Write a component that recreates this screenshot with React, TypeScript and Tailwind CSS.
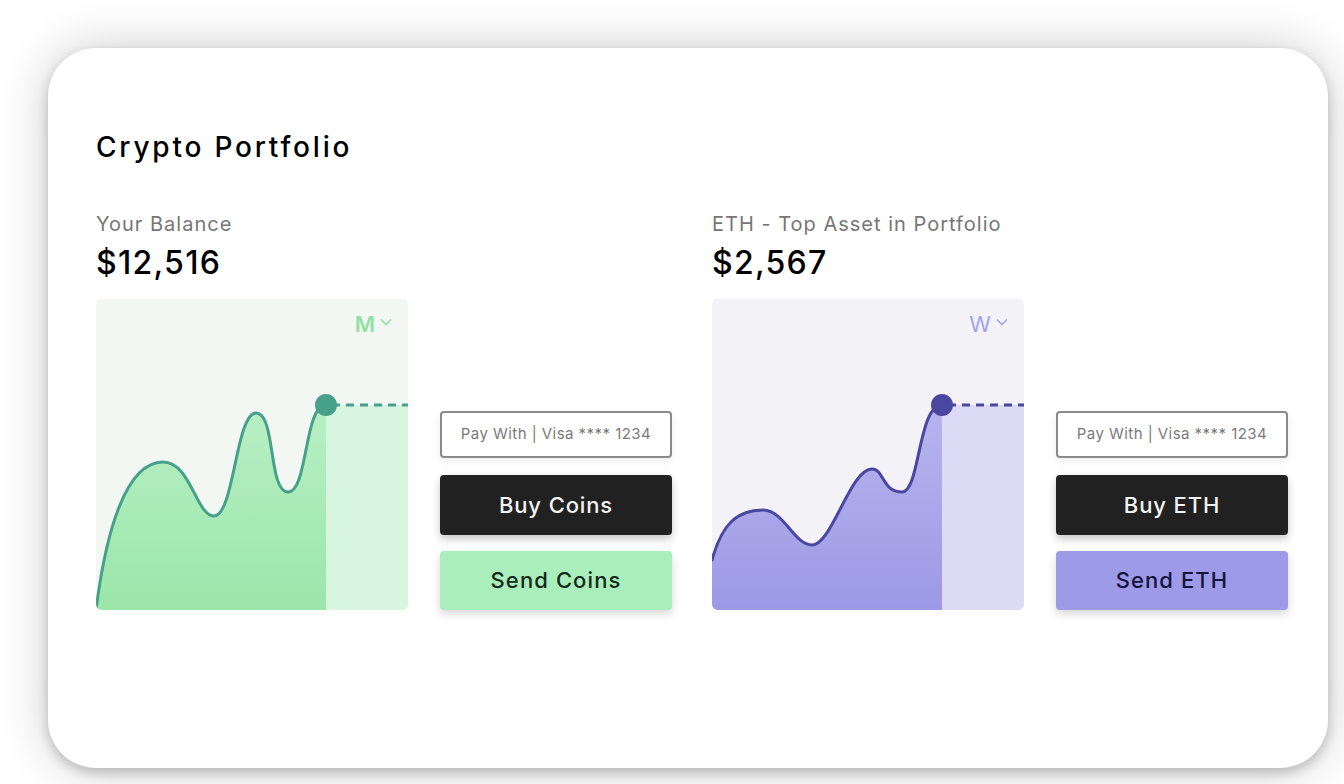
import React from 'react';

type Theme = {
  bg: string;
  light: string;
  stroke: string;
  top: string;
  bottom: string;
  label: string;
  line: string;
  area: string;
  id: string;
};

const green: Theme = {
  bg: '#f2f7f3',
  light: '#d8f5df',
  stroke: '#47a08a',
  top: '#b8efc5',
  bottom: '#9be6aa',
  label: 'M',
  line: 'M0,311 C10,232 30,163 67,163 C95,163 100,217 118,217 C138,217 140,114 160,114 C180,114 172,193 192,193 C212,193 208,106 230,106',
  area: 'M0,311 C10,232 30,163 67,163 C95,163 100,217 118,217 C138,217 140,114 160,114 C180,114 172,193 192,193 C212,193 208,106 230,106 L230,311 Z',
  id: 'g',
};

const purple: Theme = {
  bg: '#f3f2f7',
  light: '#dcdaf5',
  stroke: '#4a47a0',
  top: '#b7b5ed',
  bottom: '#9c99e6',
  label: 'W',
  line: 'M0,261 C10,225 25,211 51,211 C72,211 82,246 100,246 C120,246 138,170 160,170 C172,170 170,193 190,193 C208,193 206,106 230,106',
  area: 'M0,261 C10,225 25,211 51,211 C72,211 82,246 100,246 C120,246 138,170 160,170 C172,170 170,193 190,193 C208,193 206,106 230,106 L230,311 L0,311 Z',
  id: 'p',
};

const Chart = ({ t, labelClass }: { t: Theme; labelClass: string }) => (
  <div className="relative w-[312px] h-[311px] rounded-[6px] overflow-hidden" style={{ background: t.bg }}>
    <svg width="312" height="311" viewBox="0 0 312 311" className="block">
      <defs>
        <linearGradient id={`grad-${t.id}`} x1="0" y1="0" x2="0" y2="1">
          <stop offset="0" stopColor={t.top} />
          <stop offset="1" stopColor={t.bottom} />
        </linearGradient>
      </defs>
      <rect x="230" y="106" width="82" height="205" fill={t.light} />
      <path d={t.area} fill={`url(#grad-${t.id})`} />
      <path d={t.line} fill="none" stroke={t.stroke} strokeWidth="3" strokeLinecap="round" />
      <line x1="236" y1="106" x2="312" y2="106" stroke={t.stroke} strokeWidth="3" strokeDasharray="8 6" />
      <circle cx="230" cy="106" r="11" fill={t.stroke} />
    </svg>
    {/* period selector */}
    <div className={`absolute top-[12px] right-[16px] flex items-center gap-[5px] ${labelClass}`}>
      <span className="text-[22px] leading-[26px]">{t.label}</span>
      <svg width="12" height="8" viewBox="0 0 12 8" className="mb-[4px]">
        <polyline points="1,1.5 6,6.5 11,1.5" fill="none" stroke="currentColor" strokeWidth="1.6" />
      </svg>
    </div>
  </div>
);

const Section = ({
  title,
  amount,
  theme,
  labelClass,
  buy,
  send,
  sendClass,
}: {
  title: string;
  amount: string;
  theme: Theme;
  labelClass: string;
  buy: string;
  send: string;
  sendClass: string;
}) => (
  <div className="w-[576px]">
    <p className="text-[20px] leading-[28px] text-[#767676] mt-[46px] tracking-[0.05em]">{title}</p>
    <p className="text-[32px] leading-[40px] font-medium text-black mt-[5px] tracking-[0.04em]">{amount}</p>
    <div className="flex items-end gap-8 mt-[16px]">
      <Chart t={theme} labelClass={labelClass} />
      <div className="w-[232px] flex flex-col">
        <div className="h-[47px] rounded-[4px] border-2 border-[#8a8a8a] bg-white flex items-center justify-center text-[15px] tracking-[0.03em] text-[#7a7a7a] shadow-[0_3px_8px_rgba(0,0,0,0.07)]">
          Pay With | Visa **** 1234
        </div>
        <button className="mt-[17px] h-[60px] rounded-[4px] bg-[#212121] text-[#f2f2f2] text-[22px] font-medium tracking-[0.04em] shadow-[0_4px_8px_rgba(0,0,0,0.22)]">
          {buy}
        </button>
        <button className={`mt-[16px] h-[59px] rounded-[4px] text-[22px] font-medium tracking-[0.05em] shadow-[0_4px_8px_rgba(0,0,0,0.16)] ${sendClass}`}>
          {send}
        </button>
      </div>
    </div>
  </div>
);

export default function App() {
  return (
    <div className="min-h-screen bg-white pt-12 pl-12 font-['Inter','Noto_Sans',sans-serif]">
      <div className="w-[1280px] h-[720px] rounded-[48px] bg-white px-12 pt-[82px] shadow-[0_5px_12px_rgba(0,0,0,0.2),0_0_50px_rgba(0,0,0,0.2)]">
        <h1 className="text-[28px] leading-[34px] font-medium text-black tracking-[0.1em]">Crypto Portfolio</h1>
        <div className="flex gap-10">
          <Section
            title="Your Balance"
            amount="$12,516"
            theme={green}
            labelClass="text-[#93e0a5] font-semibold"
            buy="Buy Coins"
            send="Send Coins"
            sendClass="bg-[#a9eebb] text-[#16291b]"
          />
          <Section
            title="ETH - Top Asset in Portfolio"
            amount="$2,567"
            theme={purple}
            labelClass="text-[#a6a3ea]"
            buy="Buy ETH"
            send="Send ETH"
            sendClass="bg-[#9d9ae8] text-[#15143a]"
          />
        </div>
      </div>
    </div>
  );
}
